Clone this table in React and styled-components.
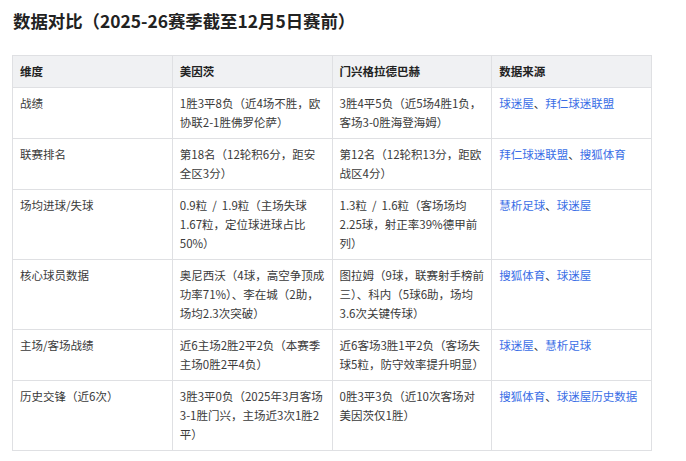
import React from "react";
import styled, { createGlobalStyle } from "styled-components";

const Global = createGlobalStyle`
  html, body { margin: 0; padding: 0; background: #ffffff; }
  body {
    font-family: "Noto Sans CJK SC", "Noto Sans", sans-serif;
    color: #333333;
  }
`;

const Page = styled.div`
  padding: 7px 12px 0 12px;
  width: 686px;
  box-sizing: border-box;
`;

const Title = styled.h2`
  margin: 0 0 21px 1px;
  font-size: 17.4px;
  line-height: 27px;
  font-weight: 700;
  color: #222222;
`;

const Table = styled.table`
  border-collapse: collapse;
  table-layout: fixed;
  width: 640px;
  font-size: 11.5px;
  line-height: 19px;
`;

const Th = styled.th`
  background: #f0f1f3;
  border: 1px solid #dfe0e3;
  text-align: left;
  font-weight: 700;
  color: #222222;
  padding: 6px 7px;
  vertical-align: top;
`;

const Td = styled.td`
  border: 1px solid #dfe0e3;
  padding: 6px 7px;
  vertical-align: top;
  color: #3a3a3a;
  word-spacing: 2.5px;
`;

const Link = styled.a`
  color: #3a6ee6;
  text-decoration: none;
`;

const rows = [
  ["战绩", "1胜3平8负（近4场不胜，欧协联2-1胜佛罗伦萨）", "3胜4平5负（近5场4胜1负，客场3-0胜海登海姆）", ["球迷屋", "拜仁球迷联盟"]],
  ["联赛排名", "第18名（12轮积6分，距安全区3分）", "第12名（12轮积13分，距欧战区4分）", ["拜仁球迷联盟", "搜狐体育"]],
  ["场均进球/失球", "0.9粒 / 1.9粒（主场失球1.67粒，定位球进球占比50%）", "1.3粒 / 1.6粒（客场场均2.25球，射正率39%德甲前列）", ["慧析足球", "球迷屋"]],
  ["核心球员数据", "奥尼西沃（4球，高空争顶成功率71%）、李在城（2助，场均2.3次突破）", "图拉姆（9球，联赛射手榜前三）、科内（5球6助，场均3.6次关键传球）", ["搜狐体育", "球迷屋"]],
  ["主场/客场战绩", "近6主场2胜2平2负（本赛季主场0胜2平4负）", "近6客场3胜1平2负（客场失球5粒，防守效率提升明显）", ["球迷屋", "慧析足球"]],
  ["历史交锋（近6次）", "3胜3平0负（2025年3月客场3-1胜门兴，主场近3次1胜2平）", "0胜3平3负（近10次客场对美因茨仅1胜）", ["搜狐体育", "球迷屋历史数据"]],
];

export default function App() {
  return (
    <Page>
      <Global />
      <Title>数据对比（2025-26赛季截至12月5日赛前）</Title>
      <Table>
        <thead>
          <tr>
            <Th>维度</Th>
            <Th>美因茨</Th>
            <Th>门兴格拉德巴赫</Th>
            <Th>数据来源</Th>
          </tr>
        </thead>
        <tbody>
          {rows.map((r) => (
            <tr key={r[0]}>
              <Td>{r[0]}</Td>
              <Td>{r[1]}</Td>
              <Td>{r[2]}</Td>
              <Td>
                {r[3].map((s, i) => (
                  <React.Fragment key={s}>
                    {i > 0 && "、"}
                    <Link href="#">{s}</Link>
                  </React.Fragment>
                ))}
              </Td>
            </tr>
          ))}
        </tbody>
      </Table>
    </Page>
  );
}
